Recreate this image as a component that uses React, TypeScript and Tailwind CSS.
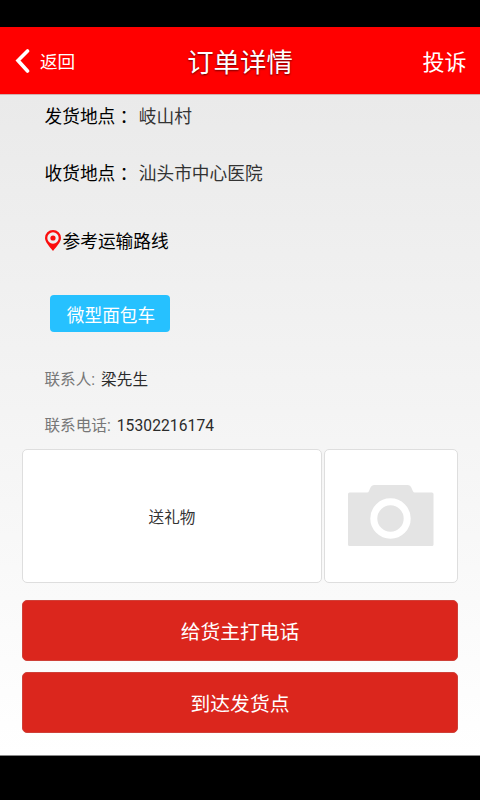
interface InfoRowProps {
  label: string;
  value: string;
}

const CameraIcon = () => (
  <svg className="mb-[2px] h-[61px] w-[86px]" viewBox="0 0 86 61">
    <path
      d="M1.500 7.500H19q1.500 0 2-1.500l1.500-3.500Q23.500 0 26 0h34q2.500 0 3.300 2.500L64.800 6q.6 1.500 2 1.500H84q1.500 0 1.500 1.500v50.500q0 1.500-1.500 1.500H1.500Q0 61 0 59.500V9q0-1.500 1.500-1.500z"
      fill="#e4e4e4"
    />
    <circle cx="42.500" cy="33.500" r="16.700" fill="none" stroke="#fff" strokeWidth="7" />
  </svg>
);

const PinIcon = () => (
  <svg className="mb-[3px] h-[21px] w-4" viewBox="0 0 16 21">
    <path
      fillRule="evenodd"
      fill="#fb0d0d"
      d="M8 0a8 8 0 0 1 8 8c0 4-4.500 8.500-8 13C4.500 16.500 0 12 0 8a8 8 0 0 1 8-8zm0 2.300a5.700 5.700 0 1 0 0 11.400A5.700 5.700 0 0 0 8 2.300z"
    />
    <circle cx="8" cy="8" r="2.600" fill="#fb0d0d" />
  </svg>
);

const PlaceRow = ({ label, value }: InfoRowProps) => (
  <div className="flex h-[57px] items-start pl-[44.5px] text-[17.7px] leading-6">
    <span className="text-black">{label}</span>
    <span className="-mt-px w-[23.5px] font-['Noto_Sans_CJK_TC',sans-serif] text-black">：</span>
    <span className="text-[#333]">{value}</span>
  </div>
);

const ContactRow = ({ label, value }: InfoRowProps) => (
  <div className="flex h-[46px] items-start gap-[6px] pl-[44.5px] text-[15.6px] leading-6">
    <span className="text-[#777]">{label}:</span>
    <span className="tracking-[0.1px] text-[#2b2b2b]">{value}</span>
  </div>
);

const ActionButton = ({ text }: { text: string }) => (
  <button
    type="button"
    className="h-[61px] w-full rounded-[5px] border border-[#cf4038] bg-[#db261d] pt-[4px] text-[19.8px] text-white"
  >
    {text}
  </button>
);

export default function App() {
  return (
    <div className="flex h-[800px] w-[480px] flex-col overflow-hidden bg-black font-[Roboto,'Noto_Sans_CJK_SC',sans-serif]">
      <header className="mt-[27px] grid h-[67px] shrink-0 grid-cols-3 items-center bg-[#ff0000] text-white">
        <div className="flex items-center gap-[10px] pt-[2px] pl-[14px] text-[17.6px]">
          <svg className="h-6 w-[16px]" viewBox="0 0 16 24">
            <path d="M13.500 2L4 11.500l9.500 10.500" fill="none" stroke="#fff" strokeWidth="3.600" strokeLinecap="round" />
          </svg>
          <span className="pt-[2px]">返回</span>
        </div>
        <h1 className="pt-[7px] text-center text-[26.4px] [text-shadow:0_1px_2px_rgba(0,0,0,0.6)]">订单详情</h1>
        <span className="pt-[3px] pr-[13.5px] text-right text-[22px]">投诉</span>
      </header>

      <main className="flex h-[662px] shrink-0 flex-col border-t border-b border-t-[#d0b0b0] border-b-[#888] bg-linear-to-b from-[#eaeaea] to-white pt-[10px]">
        <PlaceRow label="发货地点" value="岐山村" />
        <PlaceRow label="收货地点" value="汕头市中心医院" />

        <div className="mt-[11px] flex h-6 items-center gap-[2px] pl-[44.5px] text-[17.7px] text-black">
          <PinIcon />
          <span>参考运输路线</span>
        </div>

        <div className="mt-[41px] ml-[50px] flex h-[37px] w-[120px] items-center justify-center rounded-[4px] bg-[#26c1ff] pt-[6px] pl-[2px] text-[17.7px] text-white">
          微型面包车
        </div>

        <div className="mt-[36px]">
          <ContactRow label="联系人" value="梁先生" />
          <ContactRow label="联系电话" value="15302216174" />
        </div>

        <div className="-mt-[11px] flex gap-[2px] px-[22px]">
          <div className="flex h-[134px] w-[300px] items-center justify-center rounded-[5px] border border-[#dedede] bg-white pt-[5px] text-[15.6px] text-[#333]">
            送礼物
          </div>
          <div className="flex h-[134px] w-[134px] items-center justify-center rounded-[5px] border border-[#dedede] bg-white">
            <CameraIcon />
          </div>
        </div>

        <div className="mt-[17px] flex flex-col gap-[11px] px-[22px]">
          <ActionButton text="给货主打电话" />
          <ActionButton text="到达发货点" />
        </div>
      </main>
    </div>
  );
}
